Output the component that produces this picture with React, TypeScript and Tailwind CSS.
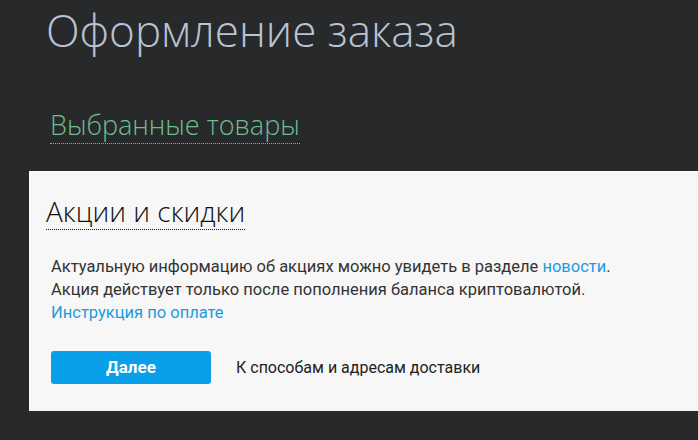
export default function App() {
  return (
    <div className="min-h-[440px] w-[698px] overflow-hidden bg-[#28292b] font-['Roboto',sans-serif]">
      <div className="pl-[46px] pt-[6px]">
        <h1 className="text-[44px] leading-[48px] font-light text-[#b9c3d3] font-['Open_Sans',sans-serif]">
          Оформление заказа
        </h1>
      </div>
      <div className="pl-[50px] pt-[56px]">
        <span className="inline-block text-[27px] leading-[30px] text-[#6cbf8f] border-b border-dotted border-[#6cbf8f] pb-[3px] font-['Open_Sans',sans-serif] font-light">
          Выбранные товары
        </span>
      </div>
      <div className="ml-[29px] mt-[27px] h-[240px] bg-[#f7f7f7] border-t border-l border-[#fdfdfd] pl-[16px] pt-[23px]">
        <h2 className="inline-block text-[28px] leading-[32px] text-[#111] font-light border-b border-dotted border-[#111] pb-[2px] font-['Open_Sans',sans-serif]">
          Акции и скидки
        </h2>
        <div className="pl-[5px] pt-[25px] text-[16.5px] leading-[23px] text-[#333]">
          <p>
            Актуальную информацию об акциях можно увидеть в разделе{' '}
            <a className="text-[#1a9be0]">новости</a>.
          </p>
          <p>Акция действует только после пополнения баланса криптовалютой.</p>
          <p>
            <a className="text-[#1a9be0]">Инструкция по оплате</a>
          </p>
          <div className="flex items-center gap-[25px] pt-[27px]">
            <button className="w-[160px] h-[33px] rounded-[3px] bg-[#0a9fe9] text-white font-bold text-[17px]">
              Далее
            </button>
            <span className="text-[#222] text-[16px]">К способам и адресам доставки</span>
          </div>
        </div>
      </div>
    </div>
  );
}
